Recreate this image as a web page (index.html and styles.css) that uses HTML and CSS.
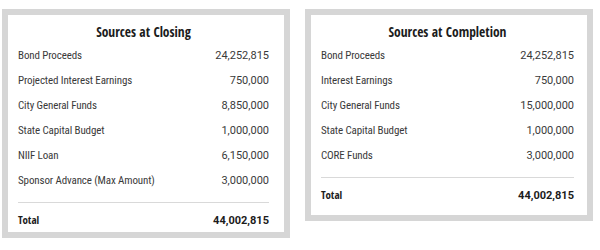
FILE: index.html
```html
<!DOCTYPE html>
<html lang="en">
<head>
<meta charset="utf-8">
<title>Sources</title>
<link rel="stylesheet" href="styles.css">
</head>
<body>
<div class="page">
  <section class="card card--closing">
    <h2 class="card-title">Sources at Closing</h2>
    <ul class="rows">
      <li class="row"><span class="label">Bond Proceeds</span><span class="amount">24,252,815</span></li>
      <li class="row"><span class="label">Projected Interest Earnings</span><span class="amount">750,000</span></li>
      <li class="row"><span class="label">City General Funds</span><span class="amount">8,850,000</span></li>
      <li class="row"><span class="label">State Capital Budget</span><span class="amount">1,000,000</span></li>
      <li class="row"><span class="label">NIIF Loan</span><span class="amount">6,150,000</span></li>
      <li class="row"><span class="label">Sponsor Advance (Max Amount)</span><span class="amount">3,000,000</span></li>
    </ul>
    <div class="total"><span class="label">Total</span><span class="amount">44,002,815</span></div>
  </section>
  <section class="card card--completion">
    <h2 class="card-title">Sources at Completion</h2>
    <ul class="rows">
      <li class="row"><span class="label">Bond Proceeds</span><span class="amount">24,252,815</span></li>
      <li class="row"><span class="label">Interest Earnings</span><span class="amount">750,000</span></li>
      <li class="row"><span class="label">City General Funds</span><span class="amount">15,000,000</span></li>
      <li class="row"><span class="label">State Capital Budget</span><span class="amount">1,000,000</span></li>
      <li class="row"><span class="label">CORE Funds</span><span class="amount">3,000,000</span></li>
    </ul>
    <div class="total"><span class="label">Total</span><span class="amount">44,002,815</span></div>
  </section>
</div>
</body>
</html>
```
FILE: styles.css
```css
html, body {
  margin: 0;
  padding: 0;
  background: #ffffff;
}

body {
  font-family: Roboto, "Liberation Sans", sans-serif;
  color: #3a3a3a;
}

.page {
  display: flex;
  align-items: flex-start;
  gap: 15px;
  padding: 9px 0 0 2px;
}

.card {
  box-sizing: border-box;
  width: 288px;
  border: 6px solid #d6d6d6;
  background: #ffffff;
  padding: 7px 15px 4px 10px;
}

.card--completion {
  padding-right: 13px;
  padding-bottom: 12px;
}

.card-title {
  margin: 0 0 1px;
  font-family: "Open Sans Condensed", "Open Sans", Roboto, sans-serif;
  font-stretch: 75%;
  font-size: 13.5px;
  line-height: 20px;
  font-weight: bold;
  text-align: center;
  color: #1c1c1c;
}

.rows {
  list-style: none;
  margin: 0 0 9px;
  padding: 0;
}

.row,
.total {
  display: flex;
  justify-content: space-between;
  align-items: baseline;
}

.row {
  height: 25px;
  line-height: 25px;
}

.label {
  font-family: "Roboto Condensed", Roboto, sans-serif;
  font-stretch: 85%;
  font-size: 11px;
  letter-spacing: -0.12px;
  color: #3a3a3a;
}

.amount {
  font-size: 11px;
}

.total {
  height: 16px;
  border-top: 1px solid #d9d9d9;
  padding-top: 9px;
  line-height: 16px;
  font-weight: bold;
  color: #1c1c1c;
}

.total .label {
  font-family: "Open Sans Condensed", "Open Sans", Roboto, sans-serif;
  font-stretch: 75%;
  font-weight: bold;
  font-size: 11px;
  letter-spacing: 0;
  color: #1c1c1c;
}
```
